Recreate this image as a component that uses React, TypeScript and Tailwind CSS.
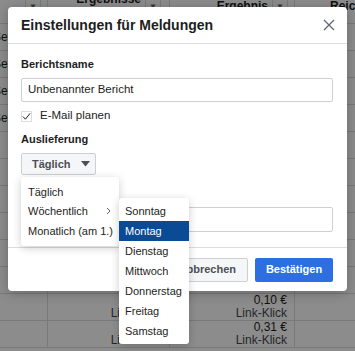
import React from "react";

const ROWS = [
  { left: "Set", c2: [], c3: [] },
  { left: "Set", c2: [], c3: [] },
  { left: "Set", c2: [], c3: [] },
  { left: "Set", c2: [], c3: [] },
  { left: "", c2: [], c3: [] },
  { left: "", c2: [], c3: [] },
  { left: "", c2: [], c3: [] },
  { left: "", c2: [], c3: [] },
  { left: "", c2: [], c3: [] },
  { left: "", c2: ["0,12 €", "Link-Klick"], c3: ["0,09 €", "Link-Klick"] },
  { left: "", c2: ["0,14 €", "Link-Klick"], c3: ["0,10 €", "Link-Klick"] },
  { left: "", c2: ["0,28 €", "Link-Klick"], c3: ["0,31 €", "Link-Klick"] },
];

const DAYS = ["Sonntag", "Montag", "Dienstag", "Mittwoch", "Donnerstag", "Freitag", "Samstag"];

function Caret() {
  return (
    <span className="flex h-[14px] w-[16px] items-center justify-center border-x border-[#dadde1] text-[8px] text-[#606770]">
      ▼
    </span>
  );
}

export default function App() {
  return (
    <div className="relative h-[351px] w-[355px] overflow-hidden bg-white font-['Liberation_Sans',Arial,sans-serif] text-[#1c1e21]">
      {/* background table */}
      <div className="flex flex-col text-[12px]">
        <div className="grid h-[24px] grid-cols-[48px_122px_125px_60px] border-b border-[#dadde1] font-bold">
          <div className="flex items-start justify-end border-r border-[#dadde1] pr-[6px]">
            <Caret />
          </div>
          <div className="flex items-start justify-end gap-[4px] border-r border-[#dadde1] pr-[8px] leading-[12px]">
            <span className="-mt-[7px]">Ergebnisse</span>
            <Caret />
          </div>
          <div className="flex items-start justify-end gap-[4px] border-r border-[#dadde1] pr-[6px] leading-[12px]">
            <span>Ergebnis</span>
            <Caret />
          </div>
          <div className="pl-[35px] leading-[12px]">Reic</div>
        </div>
        {ROWS.map((r, i) => (
          <div key={i} className="grid h-[27px] grid-cols-[48px_122px_125px_60px] border-b border-[#dadde1]">
            <div className="flex items-center overflow-hidden border-r border-[#dadde1]">
              <span className="-ml-[7px]">{r.left}</span>
            </div>
            <div className="flex flex-col items-end justify-center border-r border-[#dadde1] pr-[7px] leading-[13px]">
              {r.c2.map((t) => (
                <span key={t} className={t === "Link-Klick" ? "text-[#444950]" : ""}>{t}</span>
              ))}
            </div>
            <div className="flex flex-col items-end justify-center border-r border-[#dadde1] pr-[7px] leading-[13px]">
              {r.c3.map((t) => (
                <span key={t} className={t === "Link-Klick" ? "text-[#444950]" : ""}>{t}</span>
              ))}
            </div>
            <div />
          </div>
        ))}
      </div>

      {/* dim overlay */}
      <div className="absolute inset-0 bg-black/45" />

      {/* modal */}
      <div className="absolute left-[8px] top-[7px] flex h-[284px] w-[339px] flex-col rounded-[4px] bg-white shadow-[0_2px_12px_rgba(0,0,0,0.25)]">
        <div className="flex h-[37px] shrink-0 items-center justify-between border-b border-[#dadde1] pl-[13px] pr-[12px]">
          <span className="text-[14px] font-bold">Einstellungen für Meldungen</span>
          <svg width="12" height="12" viewBox="0 0 12 12">
            <path d="M1 1 L11 11 M11 1 L1 11" stroke="#606770" strokeWidth="1.3" />
          </svg>
        </div>

        <div className="flex flex-1 flex-col px-[13px] pt-[13px] text-[11px]">
          <div className="font-bold leading-[14px]">Berichtsname</div>
          <div className="mt-[7px] flex h-[24px] w-[312px] items-center rounded-[2px] border border-[#ccd0d5] px-[6px] text-[11.5px]">
            Unbenannter Bericht
          </div>
          <label className="mt-[7px] flex h-[14px] items-center gap-[8px]">
            <span className="flex h-[11px] w-[11px] items-center justify-center border border-[#dadde1]">
              <svg width="10" height="9" viewBox="0 0 10 9">
                <path d="M1 4.5 L3.8 7.5 L9 1" stroke="#1c1e21" strokeWidth="1.1" fill="none" />
              </svg>
            </span>
            <span className="text-[11.5px] text-[#1c1e21]">E-Mail planen</span>
          </label>
          <div className="mt-[9px] font-bold leading-[14px]">Auslieferung</div>
          <div className="mt-[7px] flex h-[22px] w-[75px] items-center gap-[10px] rounded-[2px] border border-[#ccd0d5] bg-[#f5f6f7] pl-[10px] font-bold text-[#4b4f56]">
            <span>Täglich</span>
            <svg width="9" height="6" viewBox="0 0 9 6">
              <path d="M0 0 L9 0 L4.5 5.5 Z" fill="#4b4f56" />
            </svg>
          </div>
          <div className="mt-[10px] font-bold leading-[14px]">Empfänger</div>
          <div className="mt-[8px] h-[25px] w-[312px] rounded-[2px] border border-[#ccd0d5]" />
        </div>

        <div className="flex h-[44px] shrink-0 items-center justify-end gap-[7px] border-t border-[#dadde1] pr-[14px] text-[11px] font-bold">
          <button className="h-[24px] rounded-[2px] border border-[#ccd0d5] bg-[#f5f6f7] px-[11px] text-[#4b4f56]">
            Abbrechen
          </button>
          <button className="h-[24px] w-[78px] rounded-[2px] bg-[#2d6fe0] text-white">Bestätigen</button>
        </div>
      </div>

      {/* delivery menu */}
      <div className="absolute left-[21px] top-[177px] flex w-[98px] flex-col rounded-[3px] bg-white py-[5px] text-[11px] shadow-[0_2px_8px_rgba(0,0,0,0.2)]">
        <div className="flex h-[19.5px] items-center px-[7px]">Täglich</div>
        <div className="flex h-[19.5px] items-center justify-between pl-[7px] pr-[8px]">
          <span>Wöchentlich</span>
          <svg width="5" height="8" viewBox="0 0 5 8">
            <path d="M1 1 L4 4 L1 7" stroke="#606770" strokeWidth="1" fill="none" />
          </svg>
        </div>
        <div className="flex h-[19.5px] items-center whitespace-nowrap px-[7px]">Monatlich (am 1.)</div>
      </div>

      {/* weekday submenu */}
      <div className="absolute left-[119px] top-[198px] flex w-[70px] flex-col rounded-[3px] bg-white py-[3px] text-[11px] shadow-[0_2px_8px_rgba(0,0,0,0.2)]">
        {DAYS.map((d) => (
          <div
            key={d}
            className={
              d === "Montag"
                ? "flex h-[20px] items-center bg-[#0b4a94] px-[6px] text-white"
                : "flex h-[20px] items-center px-[6px]"
            }
          >
            {d}
          </div>
        ))}
      </div>
    </div>
  );
}
